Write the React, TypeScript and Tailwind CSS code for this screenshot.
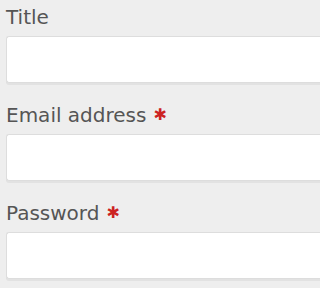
export default function App() {
  const fields = [
    { label: "Title", req: false },
    { label: "Email address", req: true },
    { label: "Password", req: true },
  ];
  return (
    <div className="w-full min-w-[288px] h-screen min-h-[288px] overflow-hidden bg-[#eeeeee] pl-[6px] pt-[4px]" style={{ fontFamily: '"DejaVu Sans", sans-serif' }}>
      <div className="flex flex-col">
        {fields.map((f) => (
          <div key={f.label} className="flex flex-col mb-[19px]">
            <div className="flex items-center text-[20px] leading-[26px] text-[#555555] mb-[6px]">
              <span>{f.label}</span>
              {f.req && <span className="ml-[7px] text-[#cc2222] text-[16px] leading-none font-bold">✱</span>}
            </div>
            <div className="h-[47px] bg-white border border-r-0 border-[#dddddd] rounded-l-[3px] shadow-[0_2px_0_#e2e2e2]" />
          </div>
        ))}
      </div>
    </div>
  );
}
